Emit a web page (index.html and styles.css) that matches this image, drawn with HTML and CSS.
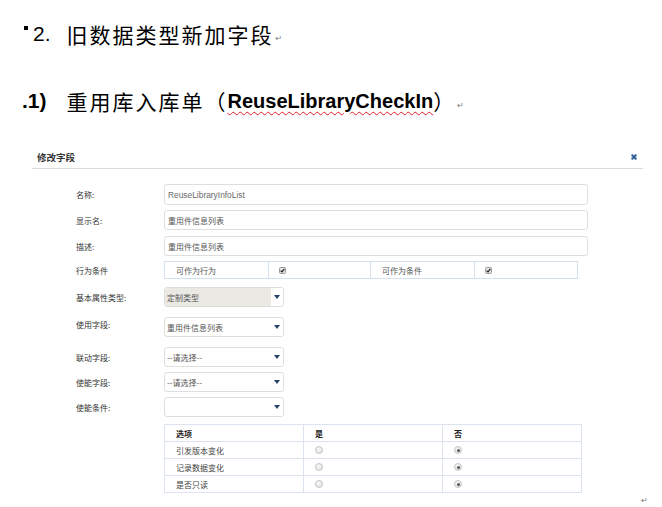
FILE: index.html
```html
<!DOCTYPE html>
<html lang="zh-CN">
<head>
<meta charset="utf-8">
<title>修改字段</title>
<link rel="stylesheet" href="styles.css">
</head>
<body>
<div class="page">
  <p class="h1"><span class="bullet"></span><span class="num">2.</span><span class="cn1">旧数据类型新加字段</span><span class="pm">↵</span></p>
  <p class="h2"><span class="num2">.1)</span><span class="cn2 cn2-start">重用库入库单（</span><span class="en">ReuseLibraryCheckIn</span><span class="cn2">）</span><span class="pm pm2">↵</span></p>

  <div class="dialog">
    <div class="dlg-head">
      <span class="title">修改字段</span>
      <span class="close"><svg width="6" height="6" viewBox="0 0 6 6"><rect x="0" y="0" width="6" height="6" fill="#c9d6e8"/><path d="M0.8 0.8L5.2 5.2M5.2 0.8L0.8 5.2" stroke="#1d4f91" stroke-width="1.6"/></svg></span>
    </div>
    <div class="form">
      <div class="row mt15">
        <span class="label">名称:</span>
        <div class="input h21"><span class="latin">ReuseLibraryInfoList</span></div>
      </div>
      <div class="row mt5">
        <span class="label">显示名:</span>
        <div class="input">重用件信息列表</div>
      </div>
      <div class="row mt6">
        <span class="label">描述:</span>
        <div class="input">重用件信息列表</div>
      </div>
      <div class="row mt5">
        <span class="label">行为条件</span>
        <div class="behav">
          <div class="bcell txt">可作为行为</div>
          <div class="bcell"><span class="chk"><svg width="7" height="7" viewBox="0 0 7 7"><rect x="0.5" y="0.5" width="6" height="6" rx="1" fill="#e2e2e2" stroke="#9a9a9a"/><path d="M1.7 3.6L3 4.9L5.4 1.9" fill="none" stroke="#222" stroke-width="1.2"/></svg></span></div>
          <div class="bcell txt">可作为条件</div>
          <div class="bcell"><span class="chk"><svg width="7" height="7" viewBox="0 0 7 7"><rect x="0.5" y="0.5" width="6" height="6" rx="1" fill="#e2e2e2" stroke="#9a9a9a"/><path d="M1.7 3.6L3 4.9L5.4 1.9" fill="none" stroke="#222" stroke-width="1.2"/></svg></span></div>
        </div>
      </div>
      <div class="row mt8">
        <span class="label">基本属性类型:</span>
        <div class="select disabled"><span class="sel-text">定制类型</span><span class="sel-btn"><span class="arrow"></span></span></div>
      </div>
      <div class="row mt10">
        <span class="label lab-up">使用字段:</span>
        <div class="select"><span class="sel-text">重用件信息列表</span><span class="sel-btn"><span class="arrow"></span></span></div>
      </div>
      <div class="row mt10">
        <span class="label">联动字段:</span>
        <div class="select"><span class="sel-text">--请选择--</span><span class="sel-btn"><span class="arrow"></span></span></div>
      </div>
      <div class="row mt5">
        <span class="label">使能字段:</span>
        <div class="select"><span class="sel-text">--请选择--</span><span class="sel-btn"><span class="arrow"></span></span></div>
      </div>
      <div class="row mt5">
        <span class="label">使能条件:</span>
        <div class="select"><span class="sel-text"></span><span class="sel-btn"><span class="arrow"></span></span></div>
      </div>
      <div class="row mt7">
        <span class="label"></span>
        <table class="opts">
          <tr class="head"><td>选项</td><td>是</td><td>否</td></tr>
          <tr><td>引发版本变化</td><td><span class="radio"></span></td><td><span class="radio on"></span></td></tr>
          <tr><td>记录数据变化</td><td><span class="radio"></span></td><td><span class="radio on"></span></td></tr>
          <tr><td>是否只读</td><td><span class="radio"></span></td><td><span class="radio on"></span></td></tr>
        </table>
      </div>
    </div>
  </div>
  <div class="endmark">↵</div>
</div>
</body>
</html>
```

FILE: styles.css
```css
* { box-sizing: border-box; }
body {
  margin: 0;
  background: #fff;
  font-family: "Noto Sans CJK SC", "Liberation Sans", sans-serif;
  color: #000;
}
.page {
  width: 662px;
  height: 507px;
  overflow: hidden;
}

/* headings */
.h1 {
  margin: 0;
  padding: 22px 0 0 24px;
  height: 46px;
  line-height: 24px;
  display: flex;
  align-items: center;
}
.bullet {
  align-self: flex-start;
  margin-top: 4px;
  width: 4px;
  height: 4px;
  background: #000;
  margin-right: 5px;
}
.num {
  font-family: "Liberation Sans", sans-serif;
  font-size: 21px;
}
.cn1 {
  margin-left: 16px;
  font-size: 21px;
  letter-spacing: 2px;
}
.pm {
  font-family: "DejaVu Sans", sans-serif;
  font-size: 8px;
  color: #777;
  align-self: flex-end;
  line-height: 12px;
  margin-left: 2px;
  margin-bottom: 1px;
}
.h2 {
  margin: 43px 0 0 0;
  padding-left: 22px;
  height: 24px;
  line-height: 24px;
  display: flex;
  align-items: center;
}
.num2 {
  font-family: "Liberation Sans", sans-serif;
  font-weight: bold;
  font-size: 21px;
}
.cn2 {
  font-size: 21px;
  letter-spacing: 2px;
}
.cn2-start { margin-left: 20px; }
.en {
  font-family: "Liberation Sans", sans-serif;
  font-weight: bold;
  font-size: 20px;
  text-decoration: underline wavy #e02020;
  text-decoration-thickness: 1px;
  text-underline-offset: 3px;
}
.pm2 { margin-left: 1px; }

/* dialog */
.dialog {
  margin: 33px 0 0 32px;
  width: 611px;
}
.dlg-head {
  height: 23px;
  border-bottom: 1px solid #dcdcdc;
  display: flex;
  align-items: center;
  justify-content: space-between;
  padding: 0 6px 0 5px;
}
.title {
  font-size: 9.5px;
  font-weight: bold;
  color: #333;
}
.close { display: flex; }
.form { display: flex; flex-direction: column; }
.row { display: flex; align-items: center; }
.mt5 { margin-top: 5px; }
.mt6 { margin-top: 6px; }
.mt7 { margin-top: 7px; }
.mt8 { margin-top: 8px; }
.mt10 { margin-top: 10px; }
.mt15 { margin-top: 15px; }
.label {
  width: 132px;
  padding-left: 44px;
  font-size: 8px;
  color: #333;
  flex-shrink: 0;
}
.lab-up { position: relative; top: -3px; }
.input {
  width: 424px;
  height: 20px;
  border: 1px solid #dedede;
  border-radius: 3px;
  padding-left: 3px;
  display: flex;
  align-items: center;
  font-size: 8px;
  color: #555;
}
.input.h21 { height: 21px; }
.latin {
  font-family: "Liberation Sans", sans-serif;
  font-size: 8.4px;
  color: #6a6a6a;
}

.behav {
  display: grid;
  grid-template-columns: 103px 102px 104px 103px;
  height: 18px;
  border: 1px solid #d3e0ee;
}
.bcell {
  border-left: 1px solid #d3e0ee;
  display: flex;
  align-items: center;
  padding-left: 10px;
  font-size: 8px;
  color: #555;
}
.bcell:first-child { border-left: none; }
.bcell.txt { padding-left: 11px; }
.chk { display: flex; }

.select {
  width: 120px;
  height: 20px;
  border: 1px solid #dedede;
  border-radius: 3px;
  display: flex;
  overflow: hidden;
  font-size: 8px;
  color: #555;
}
.sel-text {
  flex: 1;
  padding-left: 2px;
  display: flex;
  align-items: center;
}
.sel-btn {
  width: 12px;
  display: flex;
  align-items: center;
  justify-content: center;
  background: #fff;
}
.disabled .sel-text { background: #eae9e4; }
.arrow {
  width: 0;
  height: 0;
  border-left: 3px solid transparent;
  border-right: 3px solid transparent;
  border-top: 4px solid #24436a;
}

.opts {
  border-collapse: collapse;
  width: 418px;
  font-size: 8px;
  color: #444;
}
.opts td {
  border: 1px solid #dbe4ee;
  height: 17px;
  padding: 0 0 0 11px;
  width: 139px;
  vertical-align: middle;
}
.opts .head td {
  font-weight: bold;
  color: #222;
}
.radio {
  display: block;
  width: 8px;
  height: 8px;
  border-radius: 50%;
  border: 1px solid #c6c6c6;
  background: radial-gradient(circle at 40% 35%, #fafafa, #dcdcdc);
  position: relative;
}
.radio.on::after {
  content: "";
  position: absolute;
  left: 1.5px;
  top: 1.5px;
  width: 3px;
  height: 3px;
  border-radius: 50%;
  background: #555;
}

.endmark {
  margin-top: 3px;
  text-align: right;
  padding-right: 14px;
  font-family: "DejaVu Sans", sans-serif;
  font-size: 8px;
  line-height: 10px;
  color: #777;
}
```
